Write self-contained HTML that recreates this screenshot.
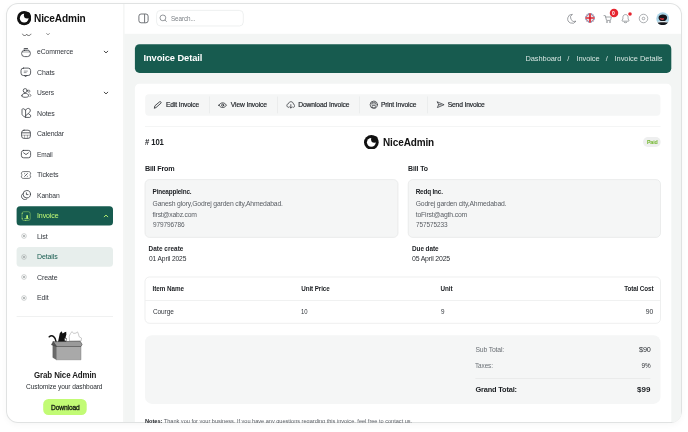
<!DOCTYPE html>
<html lang="en"><head><meta charset="utf-8"><title>Invoice Detail - NiceAdmin</title>
<style>
html,body{margin:0;padding:0;background:#fff;}
body{width:688px;height:432px;overflow:hidden;position:relative;font-family:"Liberation Sans",Arial,sans-serif;}
.frame{position:absolute;left:6px;top:3px;width:676px;height:420px;box-sizing:border-box;border-radius:12px;background:#fff;box-shadow:inset 0 0 0 1px #e0e2e2,0 2px 6px rgba(0,0,0,0.035);overflow:hidden;}
.inner{will-change:transform;position:absolute;left:-6px;top:-3px;width:688px;height:432px;}
.t{position:absolute;white-space:nowrap;display:block;}
.b{position:absolute;display:block;}
</style></head><body>
<div class="frame"><div class="inner">
<svg class="b" style="left:0;top:0" width="688" height="432" viewBox="0 0 688 432"><rect x="124.40" y="33.80" width="556.60" height="388.20" fill="#f3f5f4"/>
<rect x="123.40" y="4.00" width="1.00" height="418.00" fill="#eef0ef"/>
<rect x="16.60" y="206.20" width="96.40" height="19.40" rx="3.5" fill="#175b4f"/>
<rect x="16.60" y="247.00" width="96.40" height="19.80" rx="3.5" fill="#e7eeec"/>
<rect x="16.60" y="316.30" width="96.40" height="0.60" fill="#e6e8e8"/>
<rect x="43.20" y="399.00" width="43.50" height="16.10" rx="5.3" fill="#c2fb75"/>
<rect x="156.60" y="10.40" width="86.70" height="15.60" rx="4" fill="#fff" stroke="#e3e5e5" stroke-width="0.6"/>
<rect x="134.90" y="44.15" width="536.40" height="28.75" rx="4.6" fill="#175b4f"/>
<rect x="134.90" y="83.70" width="536.40" height="356.30" rx="4.4" fill="#fff"/>
<rect x="124.40" y="422.00" width="547.60" height="1.00" fill="#e0e2e2"/>
<rect x="145.20" y="94.30" width="515.20" height="21.40" rx="3.6" fill="#f5f6f6"/>
<rect x="209.30" y="96.50" width="0.60" height="16.80" fill="#e5e7e7"/>
<rect x="277.00" y="96.50" width="0.60" height="16.80" fill="#e5e7e7"/>
<rect x="359.30" y="96.50" width="0.60" height="16.80" fill="#e5e7e7"/>
<rect x="427.10" y="96.50" width="0.60" height="16.80" fill="#e5e7e7"/>
<rect x="145.00" y="126.10" width="515.50" height="0.60" fill="#eceeee"/>
<rect x="643.00" y="137.10" width="17.70" height="9.80" rx="4.9" fill="#eeefef"/>
<rect x="145.00" y="179.60" width="253.00" height="57.80" rx="4.5" fill="#f5f6f6" stroke="#e1e3e3" stroke-width="0.6"/>
<rect x="408.20" y="179.60" width="252.30" height="57.80" rx="4.5" fill="#f5f6f6" stroke="#e1e3e3" stroke-width="0.6"/>
<rect x="145.00" y="277.00" width="515.50" height="46.30" rx="4.5" fill="#fff" stroke="#e2e4e4" stroke-width="0.6"/>
<rect x="145.30" y="300.00" width="514.90" height="0.60" fill="#e6e8e8"/>
<rect x="145.00" y="335.20" width="515.50" height="68.70" rx="7" fill="#f5f6f6"/>
<rect x="475.40" y="378.10" width="175.00" height="0.60" fill="#e2e4e4"/></svg>
<svg class="b" style="left:16.70px;top:11.40px;" width="14.30" height="14.30" viewBox="0 0 24 24" fill="none"><circle cx="12" cy="12" r="12" fill="#111"/><circle cx="12" cy="12" r="7.2" fill="#fff"/><circle cx="17" cy="7.2" r="5.4" fill="#111"/></svg>
<span class="t" style="left:34.30px;top:12.00px;font-size:10.6px;line-height:12px;color:#111;letter-spacing:-0.120px;transform:scaleX(0.9524);transform-origin:0 50%;font-weight:700;">NiceAdmin</span>
<svg class="b" style="left:20.50px;top:29.50px;" width="12.00" height="8.00" viewBox="0 0 12 8" fill="none"><path d="M1.5 4.2c0.6 1.8 3.6 1.8 4.2 0c0.6 1.8 3.6 1.8 4.2 0" stroke="#555" stroke-width="0.9" stroke-linecap="round"/></svg>
<svg class="b" style="left:44.00px;top:30.50px;" width="8.00" height="6.00" viewBox="0 0 8 6" fill="none"><path d="M2.6 2.6l1.4 1.2l1.4-1.2" stroke="#777" stroke-width="0.8" stroke-linecap="round"/></svg>
<svg class="b" style="left:20.30px;top:45.70px;" width="12.00" height="12.00" viewBox="0 0 12 12" fill="none"><rect x="1.600" y="4.300" width="8.800" height="6.300" rx="3" stroke="#363a40" stroke-width="0.8" stroke-linecap="round" stroke-linejoin="round"/><path d="M4.200 2.700h3.400" stroke="#2e3136" stroke-width="1" stroke-linecap="round"/><path d="M2.600 4.800c.5-1 1.100-1.600 1.800-2M9.400 4.800c-.5-1-1.100-1.600-1.800-2" stroke="#9a9da1" stroke-width="0.4"/><path d="M2.400 6h7.200" stroke="#44484e" stroke-width="0.5"/></svg>
<span class="t" style="left:36.80px;top:46.00px;font-size:7.45px;line-height:12px;color:#33373d;letter-spacing:-0.120px;transform:scaleX(0.9167);transform-origin:0 50%;">eCommerce</span>
<svg class="b" style="left:101.50px;top:47.70px;" width="8.00" height="8.00" viewBox="0 0 8 8" fill="none"><path d="M2.2 3.200l1.800 1.700l1.800-1.700" stroke="#333" stroke-width="0.9" stroke-linecap="round" stroke-linejoin="round"/></svg>
<svg class="b" style="left:20.30px;top:66.00px;" width="12.00" height="12.00" viewBox="0 0 12 12" fill="none"><rect x="1" y="2.100" width="9.600" height="7.400" rx="2.400" stroke="#363a40" stroke-width="0.8" stroke-linecap="round" stroke-linejoin="round"/><path d="M4.500 9.600l1.100 1.300l1.100-1.300" stroke="#363a40" stroke-width="0.8" stroke-linecap="round" stroke-linejoin="round"/><path d="M4.200 5.100h3.200M4.200 6.600h2" stroke="#44484e" stroke-width="0.55" stroke-linecap="round"/></svg>
<span class="t" style="left:36.80px;top:67.00px;font-size:7.45px;line-height:12px;color:#33373d;letter-spacing:-0.120px;transform:scaleX(0.9384);transform-origin:0 50%;">Chats</span>
<svg class="b" style="left:20.30px;top:86.50px;" width="12.00" height="12.00" viewBox="0 0 12 12" fill="none"><circle cx="5.200" cy="3.600" r="2" stroke="#363a40" stroke-width="0.8" stroke-linecap="round" stroke-linejoin="round"/><path d="M1.800 8.800c0-1.600 1.500-2.400 3.400-2.400s3.400.8 3.400 2.400c0 1-1.500 1.500-3.400 1.500s-3.400-.5-3.400-1.500z" stroke="#363a40" stroke-width="0.8" stroke-linecap="round" stroke-linejoin="round"/><circle cx="8.800" cy="4.200" r="1.100" stroke="#3a3d42" stroke-width="0.6"/><path d="M9.600 7c.9.300 1.300.9 1.300 1.600c0 .5-.4.800-1 .9" stroke="#3a3d42" stroke-width="0.6" stroke-linecap="round"/></svg>
<span class="t" style="left:36.80px;top:87.00px;font-size:7.45px;line-height:12px;color:#33373d;letter-spacing:-0.120px;transform:scaleX(0.9016);transform-origin:0 50%;">Users</span>
<svg class="b" style="left:101.50px;top:88.50px;" width="8.00" height="8.00" viewBox="0 0 8 8" fill="none"><path d="M2.2 3.200l1.800 1.700l1.800-1.700" stroke="#333" stroke-width="0.9" stroke-linecap="round" stroke-linejoin="round"/></svg>
<svg class="b" style="left:20.30px;top:107.00px;" width="12.00" height="12.00" viewBox="0 0 12 12" fill="none"><path d="M2 2.600c0-.8.900-1.200 1.600-.8l2 1.200v7.400l-2-1.200c-1-.6-1.600-1-1.600-2z" stroke="#363a40" stroke-width="0.8" stroke-linecap="round" stroke-linejoin="round"/><path d="M5.600 3c.8-1.600 3-2.200 4.200-1c1.200 1.400.2 3.200-1.200 4.200l-3 2.600" stroke="#363a40" stroke-width="0.8" stroke-linecap="round" stroke-linejoin="round"/><path d="M8.600 6.800l2 1.400v1.200c0 .6-.4 1-1 1h-4" stroke="#363a40" stroke-width="0.8" stroke-linecap="round" stroke-linejoin="round"/></svg>
<span class="t" style="left:36.80px;top:108.00px;font-size:7.45px;line-height:12px;color:#33373d;letter-spacing:-0.120px;transform:scaleX(0.9384);transform-origin:0 50%;">Notes</span>
<svg class="b" style="left:20.30px;top:127.50px;" width="12.00" height="12.00" viewBox="0 0 12 12" fill="none"><rect x="1.600" y="2.200" width="8.800" height="8.200" rx="2.400" stroke="#363a40" stroke-width="0.8" stroke-linecap="round" stroke-linejoin="round"/><path d="M1.800 4.800h8.400" stroke="#363a40" stroke-width="0.8" stroke-linecap="round" stroke-linejoin="round"/><path d="M4.600 7v3M7.400 7v3M1.800 7.200h8.400" stroke="#3a3d42" stroke-width="0.4"/></svg>
<span class="t" style="left:36.80px;top:128.00px;font-size:7.45px;line-height:12px;color:#33373d;letter-spacing:-0.120px;transform:scaleX(0.9223);transform-origin:0 50%;">Calendar</span>
<svg class="b" style="left:20.30px;top:148.00px;" width="12.00" height="12.00" viewBox="0 0 12 12" fill="none"><rect x="1.400" y="2.400" width="9.200" height="7.400" rx="2.200" stroke="#363a40" stroke-width="0.8" stroke-linecap="round" stroke-linejoin="round"/><path d="M3.600 4.800l2.400 1.800l2.400-1.800" stroke="#363a40" stroke-width="0.8" stroke-linecap="round" stroke-linejoin="round"/></svg>
<span class="t" style="left:36.80px;top:149.00px;font-size:7.45px;line-height:12px;color:#33373d;letter-spacing:-0.120px;transform:scaleX(0.8708);transform-origin:0 50%;">Email</span>
<svg class="b" style="left:20.30px;top:168.60px;" width="12.00" height="12.00" viewBox="0 0 12 12" fill="none"><path d="M3.200 2.600h5.600c1 0 1.800.8 1.800 1.800v.6c-.8.200-.8 1.800 0 2v.600c0 1-.8 1.800-1.800 1.800h-5.600c-1 0-1.800-.8-1.800-1.800v-.600c.8-.2.800-1.800 0-2v-.600c0-1 .8-1.800 1.800-1.800z" stroke="#3a3d42" stroke-width="0.7"/><path d="M4.600 7.400l2.800-2.800M4.700 4.700h.01M7.300 7.300h.01" stroke="#363a40" stroke-width="0.8" stroke-linecap="round" stroke-linejoin="round"/></svg>
<span class="t" style="left:36.80px;top:169.00px;font-size:7.45px;line-height:12px;color:#33373d;letter-spacing:-0.120px;transform:scaleX(0.9565);transform-origin:0 50%;">Tickets</span>
<svg class="b" style="left:20.30px;top:189.30px;" width="12.00" height="12.00" viewBox="0 0 12 12" fill="none"><circle cx="6.800" cy="5.200" r="3.700" stroke="#363a40" stroke-width="0.8" stroke-linecap="round" stroke-linejoin="round"/><path d="M3.200 4.400c-1.800 1-2.200 3-1.200 4.600c1 1.600 3.200 2 4.800 1" stroke="#363a40" stroke-width="0.8" stroke-linecap="round" stroke-linejoin="round"/><path d="M6.400 3.800v1.800h1.600" stroke="#363a40" stroke-width="0.8" stroke-linecap="round" stroke-linejoin="round"/></svg>
<span class="t" style="left:36.80px;top:190.00px;font-size:7.45px;line-height:12px;color:#33373d;letter-spacing:-0.120px;transform:scaleX(0.9092);transform-origin:0 50%;">Kanban</span>
<svg class="b" style="left:20.30px;top:210.00px;" width="12.00" height="12.00" viewBox="0 0 12 12" fill="none"><rect x="2" y="1.700" width="8.200" height="8.800" rx="1.900" stroke="#c2fb75" stroke-opacity="0.5" stroke-width="0.8"/><path d="M6.300 5.200h1.700v3.300h-1.700z" fill="#c2fb75"/><path d="M4.800 8.700h3.600" stroke="#c2fb75" stroke-width="0.700" stroke-linecap="round"/><path d="M2.300 3.600v.01M2.300 8.600v.01M5.700 10.400v.01" stroke="#c2fb75" stroke-width="0.800" stroke-linecap="round"/></svg>
<span class="t" style="left:36.80px;top:210.00px;font-size:7.45px;line-height:12px;color:#c2fb75;letter-spacing:-0.120px;transform:scaleX(0.9444);transform-origin:0 50%;">Invoice</span>
<svg class="b" style="left:101.50px;top:212.00px;" width="8.00" height="8.00" viewBox="0 0 8 8" fill="none"><path d="M2.200 4.800l1.800-1.700l1.800 1.700" stroke="#c2fb75" stroke-width="0.9" stroke-linecap="round" stroke-linejoin="round"/></svg>
<svg class="b" style="left:20.80px;top:233.30px;" width="6.00" height="6.00" viewBox="0 0 6 6" fill="none"><circle cx="3" cy="3" r="2.350" stroke="#9aa0a0" stroke-width="0.5"/><circle cx="3" cy="3" r="1.100" fill="#a4a9a9"/></svg>
<span class="t" style="left:36.80px;top:231.00px;font-size:7.45px;line-height:12px;color:#33373d;letter-spacing:-0.120px;transform:scaleX(0.9628);transform-origin:0 50%;">List</span>
<svg class="b" style="left:20.80px;top:253.80px;" width="6.00" height="6.00" viewBox="0 0 6 6" fill="none"><circle cx="3" cy="3" r="2.350" stroke="#9aa0a0" stroke-width="0.5"/><circle cx="3" cy="3" r="1.100" fill="#a4a9a9"/></svg>
<span class="t" style="left:36.80px;top:251.00px;font-size:7.45px;line-height:12px;color:#175b4f;letter-spacing:-0.120px;transform:scaleX(0.9438);transform-origin:0 50%;">Details</span>
<svg class="b" style="left:20.80px;top:274.30px;" width="6.00" height="6.00" viewBox="0 0 6 6" fill="none"><circle cx="3" cy="3" r="2.350" stroke="#9aa0a0" stroke-width="0.5"/><circle cx="3" cy="3" r="1.100" fill="#a4a9a9"/></svg>
<span class="t" style="left:36.80px;top:272.00px;font-size:7.45px;line-height:12px;color:#33373d;letter-spacing:-0.120px;transform:scaleX(0.9473);transform-origin:0 50%;">Create</span>
<svg class="b" style="left:20.80px;top:294.80px;" width="6.00" height="6.00" viewBox="0 0 6 6" fill="none"><circle cx="3" cy="3" r="2.350" stroke="#9aa0a0" stroke-width="0.5"/><circle cx="3" cy="3" r="1.100" fill="#a4a9a9"/></svg>
<span class="t" style="left:36.80px;top:292.00px;font-size:7.45px;line-height:12px;color:#33373d;letter-spacing:-0.120px;transform:scaleX(0.9306);transform-origin:0 50%;">Edit</span>
<svg class="b" style="left:40.00px;top:322.00px;" width="52.00" height="46.00" viewBox="40 322 52 46" fill="none">
<path d="M56 341.500C55.500 337.500 52.500 334.200 49.200 336.800" stroke="#111" stroke-width="1.500" stroke-linecap="round"/>
<path d="M58 342l1.800-8.800l1.700-2l1.200 2.300l2-1.300l1.500-.4l.2 2.800l-.9 2.900l1.600 1.600l-1 2.900z" fill="#111"/>
<path d="M64.600 338.200l1.800.6l.4 1.600l-2 .4z" fill="#fff"/>
<path d="M69.500 341l-.3-4.800l1.300-2.600l1.500-2l1.500 1.800l2.500-.3l1.500-1.200l1 2.200l.5 2.500l2.500 1.500l-.4 2.900z" fill="#fff" stroke="#8a8a8a" stroke-width="0.450" stroke-linejoin="round"/>
<path d="M52.800 343.600l3.700 2.900v13.300l-3.700-2.300z" fill="#6a6a6a" stroke="#444" stroke-width="0.300"/>
<path d="M56.500 346.500h24.500v13.300h-24.500z" fill="#a9a9a9" stroke="#707070" stroke-width="0.400"/>
<path d="M53 341.700l27.200-.4l1.900 3.100l-1.100 2.100h-24.500z" fill="#9a9a9a" stroke="#3a3a3a" stroke-width="0.550" stroke-linejoin="round"/>
<path d="M51.400 344.800l1.800-3.400l3.300 5.100z" fill="#555" stroke="#333" stroke-width="0.400" stroke-linejoin="round"/>
</svg>
<span class="t" style="left:33.90px;top:369.00px;font-size:8.6px;line-height:12px;color:#1a1a1a;letter-spacing:-0.120px;transform:scaleX(0.9224);transform-origin:0 50%;font-weight:700;">Grab Nice Admin</span>
<span class="t" style="left:26.40px;top:381.00px;font-size:7.13px;line-height:12px;color:#2b2f33;letter-spacing:-0.120px;transform:scaleX(0.9292);transform-origin:0 50%;">Customize your dashboard</span>
<span class="t" style="left:50.60px;top:402.00px;font-size:7.13px;line-height:12px;color:#0f140f;letter-spacing:-0.120px;transform:scaleX(0.9334);transform-origin:0 50%;-webkit-text-stroke:0.28px #0f140f;">Download</span>
<svg class="b" style="left:138.30px;top:13.30px;" width="11.00" height="11.00" viewBox="0 0 11 11" fill="none"><rect x="0.900" y="1" width="9.200" height="8.800" rx="2.200" stroke="#44484e" stroke-width="0.75"/><path d="M6.600 1.200v8.400" stroke="#44484e" stroke-width="0.75"/></svg>
<svg class="b" style="left:159.40px;top:14.30px;" width="8.60" height="8.60" viewBox="0 0 8.6 8.6" fill="none"><circle cx="3.900" cy="3.900" r="2.900" stroke="#6a6e74" stroke-width="0.7"/><path d="M6.100 6.200l1.300 1.300" stroke="#6a6e74" stroke-width="0.7" stroke-linecap="round"/></svg>
<span class="t" style="left:171.00px;top:13.00px;font-size:6.91px;line-height:12px;color:#7d8287;letter-spacing:-0.120px;transform:scaleX(0.9182);transform-origin:0 50%;">Search...</span>
<svg class="b" style="left:566.00px;top:12.80px;" width="11.00" height="11.00" viewBox="0 0 11 11" fill="none"><path d="M6.400 1.300a4.500 4.500 0 1 0 3.600 6.900a3.900 3.900 0 0 1-3.600-6.900z" stroke="#6a6e74" stroke-width="0.65" stroke-linejoin="round"/></svg>
<svg class="b" style="left:584.80px;top:13.30px;" width="10.00" height="10.00" viewBox="0 0 10 10" fill="none"><defs><clipPath id="fc"><circle cx="5" cy="5" r="4.700"/></clipPath></defs><g clip-path="url(#fc)"><rect width="10" height="10" fill="#1b2f6b"/><path d="M0 0l10 10M10 0l-10 10" stroke="#fff" stroke-width="1.700"/><path d="M0 0l10 10M10 0l-10 10" stroke="#d8202c" stroke-width="0.600"/><path d="M5 0v10M0 5h10" stroke="#fff" stroke-width="3"/><path d="M5 0v10M0 5h10" stroke="#d8202c" stroke-width="1.700"/></g></svg>
<svg class="b" style="left:603.00px;top:14.00px;" width="10.00" height="10.00" viewBox="0 0 10 10" fill="none"><path d="M1 1.600h1.300l1.200 4.800h4l.9-3.400h-5.600" stroke="#6a6e74" stroke-width="0.62" stroke-linecap="round" stroke-linejoin="round"/><circle cx="4" cy="8" r="0.700" stroke="#6a6e74" stroke-width="0.5"/><circle cx="7" cy="8" r="0.700" stroke="#6a6e74" stroke-width="0.5"/></svg>
<svg class="b" style="left:608.50px;top:8.25px;" width="10.00" height="10.00" viewBox="0 0 10 10" fill="none"><circle cx="5" cy="5" r="4.250" fill="#e5252f"/></svg>
<span class="t" style="left:612.10px;top:7.00px;font-size:5.0px;line-height:12px;color:#fff;letter-spacing:0.019px;font-weight:700;">0</span>
<svg class="b" style="left:620.30px;top:12.80px;" width="11.00" height="11.00" viewBox="0 0 11 11" fill="none"><path d="M5.500 1.600c-1.600 0-2.600 1.200-2.600 2.800v1.500l-.8 1.500c-.2.400.1.800.5.800h5.800c.4 0 .7-.4.500-.8l-.8-1.500v-1.500c0-1.600-1-2.800-2.600-2.800z" stroke="#6a6e74" stroke-width="0.620" stroke-linejoin="round"/><path d="M4.300 9.500c.6.300 1.800.3 2.400 0" stroke="#6a6e74" stroke-width="0.620" stroke-linecap="round"/></svg>
<svg class="b" style="left:627.10px;top:10.90px;" width="6.00" height="6.00" viewBox="0 0 6 6" fill="none"><circle cx="3" cy="3" r="1.800" fill="#e5252f"/></svg>
<svg class="b" style="left:637.60px;top:12.80px;" width="11.00" height="11.00" viewBox="0 0 11 11" fill="none"><circle cx="5.500" cy="5.500" r="4.250" stroke="#7a7e84" stroke-width="0.620"/><circle cx="5.500" cy="5.500" r="1.300" stroke="#7a7e84" stroke-width="0.620"/></svg>
<svg class="b" style="left:655.70px;top:11.60px;" width="13.40" height="13.40" viewBox="0 0 13.4 13.4" fill="none"><defs><clipPath id="ac"><circle cx="6.700" cy="6.700" r="6.450"/></clipPath></defs><g clip-path="url(#ac)"><rect width="13.400" height="13.400" fill="#a9d3e6"/><path d="M2.600 5.200c.4-3.400 7.400-3.600 8.400-.4c.5 1.700-.6 3.600-2.200 4.200h-3.800c-1.600-.600-2.600-2.200-2.400-3.800z" fill="#14151a"/><path d="M3.600 5.400c1 .9 3 1.300 4.600.6l-.6 1.700c-1.300.5-2.800.2-3.600-.6z" fill="#d2333c"/><path d="M1 10.200c2.600-1.300 8.600-1.300 11.400 0v1h-11.400z" fill="#f4f4f4"/><path d="M0 11c3-1 10.400-1 13.400 0v2.400h-13.400z" fill="#15171c"/></g></svg>
<span class="t" style="left:143.50px;top:52.00px;font-size:9.3px;line-height:12px;color:#fff;letter-spacing:-0.083px;font-weight:700;">Invoice Detail</span>
<span class="t" style="left:525.50px;top:53.00px;font-size:7.45px;line-height:12px;color:#d6e5e1;letter-spacing:-0.072px;">Dashboard</span>
<span class="t" style="left:567.30px;top:53.00px;font-size:7.45px;line-height:12px;color:#d6e5e1;letter-spacing:0.430px;">/</span>
<span class="t" style="left:576.50px;top:53.00px;font-size:7.45px;line-height:12px;color:#d6e5e1;letter-spacing:-0.072px;">Invoice</span>
<span class="t" style="left:605.80px;top:53.00px;font-size:7.45px;line-height:12px;color:#d6e5e1;letter-spacing:0.430px;">/</span>
<span class="t" style="left:614.50px;top:53.00px;font-size:7.45px;line-height:12px;color:#d6e5e1;letter-spacing:-0.023px;">Invoice Details</span>
<svg class="b" style="left:150.00px;top:98.00px;" width="16.00" height="14.00" viewBox="150 98 16 14" fill="none"><path d="M154.400 107.900l.5-2.100l4.700-4c.9-.7 2.100.6 1.300 1.400l-4.600 4.100z" stroke="#2c2f34" stroke-width="0.85" stroke-linecap="round" stroke-linejoin="round"/></svg>
<span class="t" style="left:166.00px;top:99.00px;font-size:6.7px;line-height:12px;color:#23272c;letter-spacing:-0.128px;-webkit-text-stroke:0.18px #23272c;">Edit Invoice</span>
<svg class="b" style="left:216.00px;top:98.00px;" width="14.00" height="14.00" viewBox="216 98 14 14" fill="none"><path d="M218.900 105.200c1-1.600 2.300-2.300 3.750-2.300s2.750.7 3.750 2.300c-1 1.600-2.300 2.300-3.750 2.300s-2.750-.7-3.750-2.300z" stroke="#2c2f34" stroke-width="0.85" stroke-linecap="round" stroke-linejoin="round"/><circle cx="222.650" cy="105.200" r="1.050" stroke="#2c2f34" stroke-width="0.85" stroke-linecap="round" stroke-linejoin="round"/></svg>
<span class="t" style="left:230.80px;top:99.00px;font-size:6.7px;line-height:12px;color:#23272c;letter-spacing:-0.116px;-webkit-text-stroke:0.18px #23272c;">View Invoice</span>
<svg class="b" style="left:285.97px;top:100.37px;" width="9.46" height="9.46" viewBox="0 0 11 11" fill="none"><path d="M3.200 8.600c-1.400-.1-2.200-1-2.200-2.200c0-1.100.8-2 1.900-2.100c.3-1.500 1.400-2.300 2.800-2.300c1.700 0 2.900 1.200 2.900 2.800c1 .2 1.600 1 1.600 1.900c0 1.100-.8 1.900-2 1.900" stroke="#2c2f34" stroke-width="0.85" stroke-linecap="round" stroke-linejoin="round"/><path d="M5.600 5.400v3.800M4.300 8l1.300 1.300l1.300-1.300" stroke="#2c2f34" stroke-width="0.85" stroke-linecap="round" stroke-linejoin="round"/></svg>
<span class="t" style="left:298.20px;top:99.00px;font-size:6.7px;line-height:12px;color:#23272c;letter-spacing:-0.093px;-webkit-text-stroke:0.18px #23272c;">Download Invoice</span>
<svg class="b" style="left:368.57px;top:100.37px;" width="9.46" height="9.46" viewBox="0 0 11 11" fill="none"><circle cx="5.500" cy="5.500" r="4.200" stroke="#2c2f34" stroke-width="0.85" stroke-linecap="round" stroke-linejoin="round"/><path d="M3.600 4.400v-1.600h3.800v1.600M2.200 4.600h6.600M3.600 6.400h3.800v2.600h-3.800z" stroke="#2c2f34" stroke-width="0.7"/></svg>
<span class="t" style="left:380.90px;top:99.00px;font-size:6.7px;line-height:12px;color:#23272c;letter-spacing:-0.105px;-webkit-text-stroke:0.18px #23272c;">Print Invoice</span>
<svg class="b" style="left:435.77px;top:100.37px;" width="9.46" height="9.46" viewBox="0 0 11 11" fill="none"><path d="M1.600 2.200l7.800 3.300l-7.800 3.300l1.400-3.300z" stroke="#2c2f34" stroke-width="0.85" stroke-linecap="round" stroke-linejoin="round"/><path d="M3 5.500h3" stroke="#2c2f34" stroke-width="0.85" stroke-linecap="round" stroke-linejoin="round"/></svg>
<span class="t" style="left:447.70px;top:99.00px;font-size:6.7px;line-height:12px;color:#23272c;letter-spacing:-0.145px;-webkit-text-stroke:0.18px #23272c;">Send Invoice</span>
<span class="t" style="left:145.00px;top:136.00px;font-size:8.6px;line-height:12px;color:#1c1f23;letter-spacing:-0.120px;transform:scaleX(0.8986);transform-origin:0 50%;font-weight:700;"># 101</span>
<svg class="b" style="left:364.40px;top:134.55px;" width="14.70" height="14.70" viewBox="0 0 24 24" fill="none"><circle cx="12" cy="12" r="12" fill="#111"/><circle cx="12" cy="12" r="7.2" fill="#fff"/><circle cx="17" cy="7.2" r="5.4" fill="#111"/></svg>
<span class="t" style="left:382.70px;top:136.00px;font-size:11.0px;line-height:12px;color:#111;letter-spacing:-0.120px;transform:scaleX(0.9064);transform-origin:0 50%;font-weight:700;">NiceAdmin</span>
<span class="t" style="left:646.90px;top:136.00px;font-size:5.3px;line-height:12px;color:#6db526;letter-spacing:-0.098px;font-weight:700;">Paid</span>
<span class="t" style="left:145.00px;top:163.00px;font-size:7.2px;line-height:12px;color:#1c1f23;letter-spacing:-0.189px;font-weight:700;">Bill From</span>
<span class="t" style="left:408.30px;top:163.00px;font-size:7.2px;line-height:12px;color:#1c1f23;letter-spacing:-0.120px;transform:scaleX(0.9649);transform-origin:0 50%;font-weight:700;">Bill To</span>
<span class="t" style="left:152.60px;top:186.00px;font-size:6.4px;line-height:12px;color:#1c1f23;letter-spacing:-0.189px;font-weight:700;">PineappleInc.</span>
<span class="t" style="left:152.60px;top:198.00px;font-size:6.8px;line-height:12px;color:#5c6066;letter-spacing:-0.168px;">Ganesh glory,Godrej garden city,Ahmedabad.</span>
<span class="t" style="left:152.60px;top:209.00px;font-size:6.8px;line-height:12px;color:#5c6066;letter-spacing:-0.197px;">first@xabz.com</span>
<span class="t" style="left:152.60px;top:219.00px;font-size:6.8px;line-height:12px;color:#5c6066;letter-spacing:-0.120px;transform:scaleX(0.9558);transform-origin:0 50%;">979796786</span>
<span class="t" style="left:415.70px;top:186.00px;font-size:6.4px;line-height:12px;color:#1c1f23;letter-spacing:-0.189px;font-weight:700;">Redq Inc.</span>
<span class="t" style="left:415.70px;top:198.00px;font-size:6.8px;line-height:12px;color:#5c6066;letter-spacing:-0.166px;">Godrej garden city,Ahmedabad.</span>
<span class="t" style="left:415.70px;top:209.00px;font-size:6.8px;line-height:12px;color:#5c6066;letter-spacing:-0.148px;">toFirst@agth.com</span>
<span class="t" style="left:415.70px;top:219.00px;font-size:6.8px;line-height:12px;color:#5c6066;letter-spacing:-0.120px;transform:scaleX(0.9528);transform-origin:0 50%;">757575233</span>
<span class="t" style="left:148.50px;top:243.00px;font-size:6.4px;line-height:12px;color:#1c1f23;letter-spacing:0.045px;font-weight:700;">Date create</span>
<span class="t" style="left:148.50px;top:253.00px;font-size:6.91px;line-height:12px;color:#2a2e33;letter-spacing:-0.120px;transform:scaleX(0.9618);transform-origin:0 50%;">01 April 2025</span>
<span class="t" style="left:412.00px;top:243.00px;font-size:6.4px;line-height:12px;color:#1c1f23;letter-spacing:-0.066px;font-weight:700;">Due date</span>
<span class="t" style="left:412.00px;top:253.00px;font-size:6.91px;line-height:12px;color:#2a2e33;letter-spacing:-0.180px;">05 April 2025</span>
<span class="t" style="left:152.60px;top:283.00px;font-size:6.3px;line-height:12px;color:#1c1f23;letter-spacing:-0.040px;font-weight:700;">Item Name</span>
<span class="t" style="left:301.20px;top:283.00px;font-size:6.3px;line-height:12px;color:#1c1f23;letter-spacing:-0.091px;font-weight:700;">Unit Price</span>
<span class="t" style="left:440.50px;top:283.00px;font-size:6.3px;line-height:12px;color:#1c1f23;letter-spacing:-0.012px;font-weight:700;">Unit</span>
<span class="t" style="left:624.20px;top:283.00px;font-size:6.3px;line-height:12px;color:#1c1f23;letter-spacing:-0.113px;font-weight:700;">Total Cost</span>
<span class="t" style="left:152.60px;top:306.00px;font-size:6.8px;line-height:12px;color:#33373d;letter-spacing:-0.120px;transform:scaleX(0.9591);transform-origin:0 50%;">Courge</span>
<span class="t" style="left:301.20px;top:306.00px;font-size:6.8px;line-height:12px;color:#33373d;letter-spacing:-0.120px;transform:scaleX(0.8739);transform-origin:0 50%;">10</span>
<span class="t" style="left:440.50px;top:306.00px;font-size:6.8px;line-height:12px;color:#33373d;letter-spacing:-0.120px;transform:scaleX(0.9285);transform-origin:0 50%;">9</span>
<span class="t" style="left:645.80px;top:306.00px;font-size:6.8px;line-height:12px;color:#33373d;letter-spacing:0.018px;">90</span>
<span class="t" style="left:475.40px;top:344.00px;font-size:6.8px;line-height:12px;color:#6b7076;letter-spacing:-0.152px;">Sub Total:</span>
<span class="t" style="left:638.60px;top:344.00px;font-size:7.56px;line-height:12px;color:#2a2e33;letter-spacing:-0.120px;transform:scaleX(0.9630);transform-origin:0 50%;">$90</span>
<span class="t" style="left:475.40px;top:360.00px;font-size:6.8px;line-height:12px;color:#6b7076;letter-spacing:-0.120px;transform:scaleX(0.9454);transform-origin:0 50%;">Taxes:</span>
<span class="t" style="left:641.60px;top:360.00px;font-size:6.37px;line-height:12px;color:#2a2e33;letter-spacing:-0.203px;">9%</span>
<span class="t" style="left:475.40px;top:384.00px;font-size:7.4px;line-height:12px;color:#1c1f23;letter-spacing:-0.162px;font-weight:700;">Grand Total:</span>
<span class="t" style="left:637.00px;top:384.00px;font-size:8.0px;line-height:12px;color:#1c1f23;letter-spacing:0.017px;font-weight:700;">$99</span>
<span class="t" style="left:145px;top:415px;font-size:5.6px;line-height:12px;color:#5c6066;letter-spacing:-0.01px;"><b style="color:#1c1f23">Notes:</b> Thank you for your business. If you have any questions regarding this invoice, feel free to contact us.</span>
</div></div>
</body></html>
